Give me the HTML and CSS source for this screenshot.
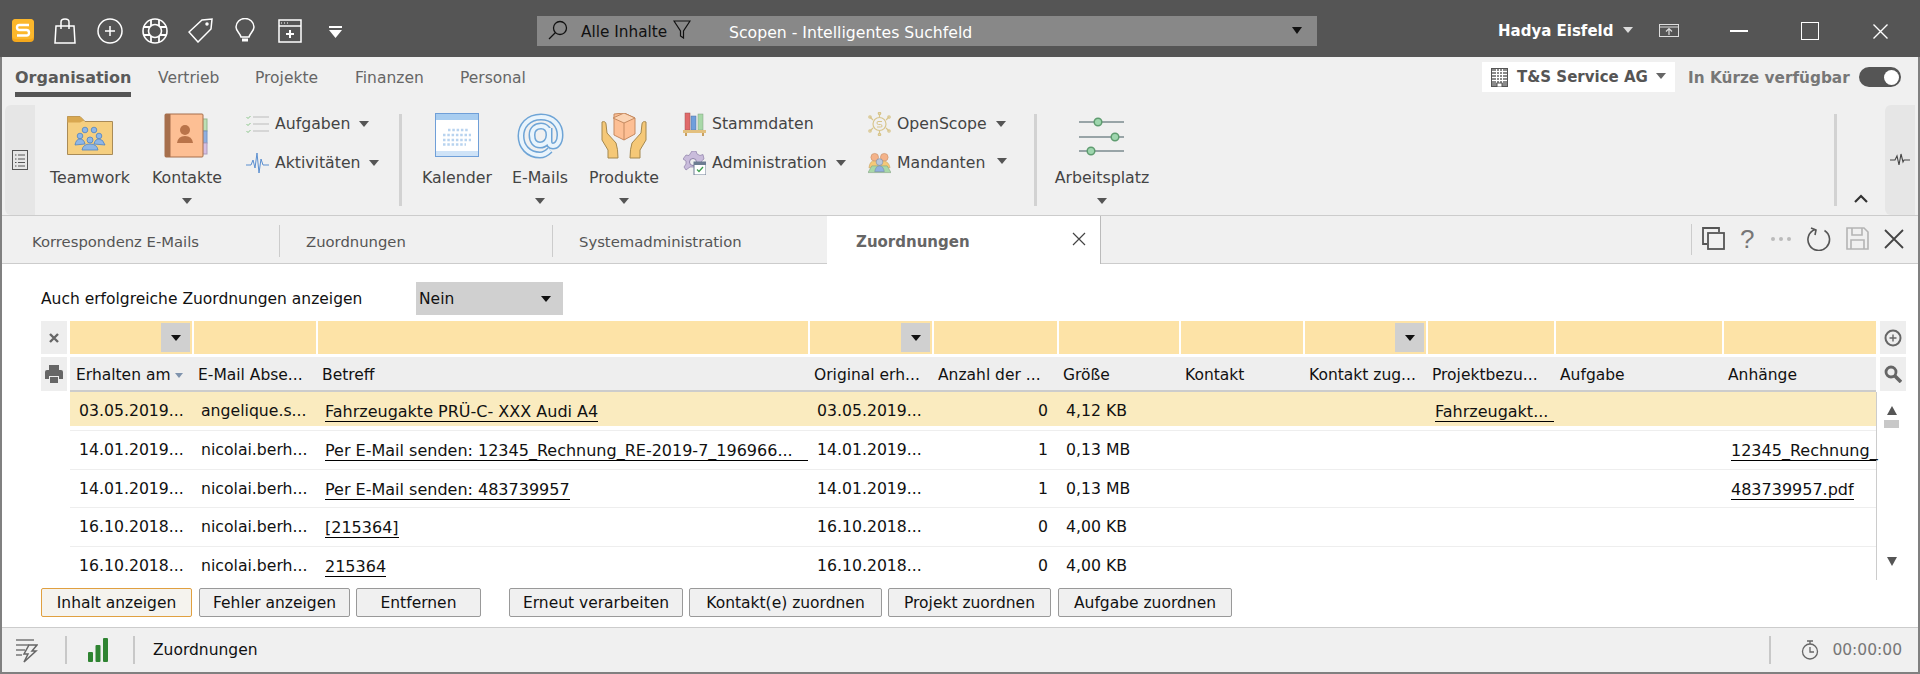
FILE: index.html
```html
<!DOCTYPE html>
<html lang="de">
<head>
<meta charset="utf-8">
<title>Zuordnungen</title>
<link rel="stylesheet" href="styles.css">
</head>
<body>
<div class="app">
  <header class="titlebar">
    <svg class="ti logo" width="22" height="23" viewBox="0 0 22 23"><rect x="0" y="0" width="22" height="23" rx="4" fill="#f5a81c"/><rect x="0" y="0" width="22" height="20" rx="4" fill="#fbb72c"/><path d="M17 6H7.5Q5 6 5 8.5T7.5 11H14.500Q17 11 17 13.800T14.500 16.500H5" fill="none" stroke="#fff" stroke-width="2.400"/></svg>
    <svg class="ti bag" width="22" height="26" viewBox="0 0 22 26" fill="none" stroke="#fff" stroke-width="1.500"><path d="M2 8H20L21 25H1Z"/><path d="M7 11V4Q7 1 11 1T15 4V11"/></svg>
    <svg class="ti plus" width="26" height="26" viewBox="0 0 26 26" fill="none" stroke="#fff" stroke-width="1.500"><circle cx="13" cy="13" r="12"/><path d="M8 13H18M13 8V18"/></svg>
    <svg class="ti buoy" width="26" height="26" viewBox="0 0 26 26" fill="none" stroke="#fff" stroke-width="1.600"><circle cx="13" cy="13" r="12"/><circle cx="13" cy="13" r="6.500"/><path d="M9 2V8M17 2V8M9 18V24M17 18V24M2 9H8M2 17H8M18 9H24M18 17H24" stroke-width="1.800"/></svg>
    <svg class="ti tag" width="25" height="25" viewBox="0 0 25 25" fill="none" stroke="#fff" stroke-width="1.500"><path d="M14 2L24 1L23 11L10 24L1 14Z"/><circle cx="19" cy="6" r="1" fill="#fff"/></svg>
    <svg class="ti bulb" width="20" height="26" viewBox="0 0 20 26" fill="none" stroke="#fff" stroke-width="1.500"><path d="M6 19C5 15 1 13 1 9A9 8.500 0 0 1 19 9C19 13 15 15 14 19Z"/><path d="M7 22H13" stroke-width="3"/></svg>
    <svg class="ti win" width="24" height="24" viewBox="0 0 24 24" fill="none" stroke="#fff" stroke-width="1.500"><rect x="1" y="1" width="22" height="22"/><path d="M1 7H23"/><path d="M3 4H4M6 4H7M9 4H10" stroke-width="1"/><path d="M8 15H16M12 11V19" stroke-width="2"/></svg>
    <svg class="ti more" width="13" height="12" viewBox="0 0 13 12" fill="#fff"><rect x="0" y="0" width="13" height="2"/><path d="M0 4H13L6.500 12Z"/></svg>
    <div class="search">
      <svg class="search-lens" width="20" height="20" viewBox="0 0 20 20" fill="none" stroke="#111" stroke-width="1.300"><circle cx="12" cy="8" r="6.500"/><path d="M7.500 12.500L1 19"/></svg>
      <span class="search-scope">Alle Inhalte</span>
      <svg class="search-filter" width="18" height="19" viewBox="0 0 18 19" fill="none" stroke="#111" stroke-width="1.200"><path d="M1 1H17L10.500 11V18L7.500 16V11Z"/></svg>
      <span class="search-hint">Scopen - Intelligentes Suchfeld</span>
      <span class="tri search-tri"></span>
    </div>
    <span class="user">Hadya Eisfeld</span>
    <span class="tri user-tri"></span>
    <svg class="export" width="20" height="13" viewBox="0 0 20 13" fill="none" stroke="#ddd" stroke-width="1"><rect x="0.500" y="0.500" width="19" height="12"/><path d="M0 3H20"/><path d="M10 11V5M7 7.500L10 4.500L13 7.500" stroke-width="1.200"/></svg>
    <svg class="wbtn wmin" width="18" height="2" viewBox="0 0 18 2"><rect width="18" height="2" fill="#fff"/></svg>
    <svg class="wbtn wmax" width="18" height="18" viewBox="0 0 18 18" fill="none" stroke="#fff"><rect x="0.500" y="0.500" width="17" height="17"/></svg>
    <svg class="wbtn wclose" width="15" height="15" viewBox="0 0 15 15" fill="none" stroke="#fff" stroke-width="1.400"><path d="M0.500 0.500L14.500 14.500M14.500 0.500L0.500 14.500"/></svg>
  </header>

  <nav class="menubar">
    <a class="menu menu-on">Organisation</a>
    <a class="menu m-v">Vertrieb</a>
    <a class="menu m-p">Projekte</a>
    <a class="menu m-f">Finanzen</a>
    <a class="menu m-e">Personal</a>
    <div class="company">
      <svg width="17" height="19" viewBox="0 0 17 19" fill="#8a8a8a" stroke="#555"><rect x="0.500" y="0.500" width="16" height="18"/><path d="M1 3.500H16M1 6.500H16M1 9.500H16M1 12.500H16M5.500 1V15M8.500 1V15M11.500 1V15" stroke="#fff" stroke-width="1"/><rect x="6" y="15" width="5" height="4" fill="#fff"/></svg>
      <b>T&amp;S Service AG</b>
      <span class="tri tri-g company-tri"></span>
    </div>
    <b class="soon">In Kürze verfügbar</b>
    <span class="toggle"><i></i></span>
  </nav>

  <section class="ribbon">
    <div class="handle handle-l">
      <svg width="16" height="20" viewBox="0 0 16 20" fill="none" stroke="#555"><rect x="0.500" y="0.500" width="15" height="19"/><path d="M3 5H4.500M6 5H13M3 9H4.500M6 9H13M3 12.500H4.500M6 12.500H13M3 16H4.500M6 16H13"/></svg>
    </div>
    <div class="big w90 ml10">
      <svg class="big-ic" width="46" height="46" viewBox="0 0 46 46"><path d="M0.500 3.500H13L18 8.500H45.500V41.500H0.500Z" fill="#f5cf80" stroke="#a98b57"/><path d="M0.500 3.500H13L17 7.500L13 9.500H0.500Z" fill="#d9a850"/><g fill="#8eb6e6" stroke="#4f83c2" stroke-width="0.800"><circle cx="18" cy="17" r="2.800"/><circle cx="27" cy="17" r="2.800"/><circle cx="13" cy="23" r="2.800"/><circle cx="32" cy="23" r="2.800"/><path d="M8 32Q9 26 13 26T18 31Z"/><path d="M27 31Q28 26 32 26T38 32Z"/><circle cx="23" cy="27" r="3"/><path d="M15 37Q16 31 23 31T31 37Z"/></g></svg>
      <span class="big-label">Teamwork</span>
    </div>
    <div class="big w90 ml7">
      <svg class="big-ic" width="46" height="46" viewBox="0 0 46 46"><rect x="38" y="6" width="5" height="12" fill="#bde0b5" stroke="#93b78d"/><rect x="38" y="18" width="5" height="12" fill="#8fb0e0" stroke="#7695c4"/><rect x="38" y="30" width="5" height="11" fill="#d5bfe4" stroke="#ad9bbb"/><rect x="1" y="1" width="38" height="43" rx="1" fill="#fdbf94" stroke="#a66f4c"/><rect x="1" y="1" width="5.500" height="43" fill="#a66f4c"/><circle cx="21" cy="17" r="5" fill="#b9744a"/><path d="M13 30Q14 23 21 23T29 30Z" fill="#b9744a"/></svg>
      <span class="big-label">Kontakte</span>
      <span class="tri big-tri"></span>
    </div>
    <div class="smalls w153">
      <div class="small">
        <svg width="23" height="18" viewBox="0 0 23 18" fill="none" stroke="#bbb" stroke-width="1.200"><path d="M7 2H23M7 9H23M7 16H23"/><path d="M0.500 2L2 3.500L4.500 1M0.500 9L2 10.500L4.500 8M0.500 16L2 17.500L4.500 15" stroke="#7fbf7f" stroke-width="0.900"/></svg>
        <span>Aufgaben</span><span class="tri"></span>
      </div>
      <div class="small">
        <svg width="23" height="24" viewBox="0 0 23 24" fill="none" stroke="#5b8fd0" stroke-width="1"><path d="M0 14H5L7 9L9 17L11 2L13 22L15 8L17 14H23"/></svg>
        <span>Aktivitäten</span><span class="tri"></span>
      </div>
    </div>
    <span class="vsep"></span>
    <div class="big w80 ml15">
      <svg class="big-ic" width="46" height="46" viewBox="0 0 46 46"><rect x="1.500" y="0.500" width="43" height="43" fill="#fff" stroke="#6f9fd8"/><rect x="2" y="1" width="42" height="6" fill="#a8cdf0"/><rect x="2" y="38" width="42" height="5" fill="#cfe3f7"/><g stroke="#b8d3ef" stroke-width="2.500" stroke-dasharray="2.500 1.800"><path d="M14 17H35M9 22H37M9 27H37M9 31.500H32"/></g></svg>
      <span class="big-label">Kalender</span>
    </div>
    <div class="big w80 ml3">
      <svg class="big-ic" width="47" height="46" viewBox="0 0 47 46" fill="none"><g stroke="#6ea4d6" stroke-width="7"><path d="M33 37Q28 42 23 42C11 42 4 33 4 23S11 4 24 4C36 4 43 12 43 22C43 30 39 33 36 33C33 33 32 31 32 28V15M32 22C32 28 28 32 23 32S15 28 15 22S19 13 24 13S32 17 32 22Z"/></g><g stroke="#e9f4fc" stroke-width="4"><path d="M33 37Q28 42 23 42C11 42 4 33 4 23S11 4 24 4C36 4 43 12 43 22C43 30 39 33 36 33C33 33 32 31 32 28V15M32 22C32 28 28 32 23 32S15 28 15 22S19 13 24 13S32 17 32 22Z"/></g></svg>
      <span class="big-label">E-Mails</span>
      <span class="tri big-tri"></span>
    </div>
    <div class="big w80 ml4">
      <svg class="big-ic" width="46" height="46" viewBox="0 0 46 46"><path d="M13 1L23 0L34 5V21L23 27L13 22Z" fill="#fdbf94" stroke="#c58a60"/><path d="M12 5L23 10L34 5L23 0Z" fill="#fbd4b4" stroke="#c58a60"/><path d="M23 10V27" stroke="#c58a60"/><path d="M1 9C3 8 5 9 5 11L6 20L15 30Q17 36 17 45H7V37L1 27Z" fill="#f5c877" stroke="#a4884f"/><path d="M45 9C43 8 41 9 41 11L40 20L31 30Q29 36 29 45H39V37L45 27Z" fill="#f5c877" stroke="#a4884f"/></svg>
      <span class="big-label">Produkte</span>
      <span class="tri big-tri"></span>
    </div>
    <div class="smalls w185">
      <div class="small">
        <svg width="23" height="24" viewBox="0 0 23 24"><rect x="2" y="1" width="5" height="17" fill="#e06a6a" stroke="#a05050" stroke-width="0.500"/><rect x="8" y="4" width="5" height="14" fill="#6f9fdc" stroke="#5070a0" stroke-width="0.500"/><rect x="15" y="2" width="5" height="16" fill="#a8d8a8" stroke="#80a080" stroke-width="0.500"/><rect x="0" y="18" width="23" height="3" fill="#e3c07f"/><path d="M3 21V24M20 21V24" stroke="#c8a060" stroke-width="2"/></svg>
        <span>Stammdaten</span>
      </div>
      <div class="small">
        <svg width="23" height="24" viewBox="0 0 23 24"><path d="M9 0H13L14 3L17 4.500L20 3.500L21 8L18.500 10V14L21 16H7L3 19L1 16L3 13V10L0 8L3 4L6 4.500Z" fill="#c9bcdb" stroke="#8c7ea8" stroke-width="0.700"/><circle cx="10" cy="11" r="3.500" fill="#f0f0f0" stroke="#8c7ea8"/><rect x="11" y="11" width="12" height="13" fill="#fff" stroke="#6d7d92"/><rect x="11" y="11" width="12" height="3" fill="#6d7d92"/><path d="M14 18.500L16 20.500L20 16" fill="none" stroke="#3f9f50" stroke-width="1.300"/></svg>
        <span>Administration</span><span class="tri"></span>
      </div>
    </div>
    <div class="smalls w166">
      <div class="small">
        <svg width="23" height="24" viewBox="0 0 23 24" fill="none" stroke="#d8c58c" stroke-width="1.200"><circle cx="11.500" cy="12" r="6.500"/><path d="M11.500 5V1.500M11.500 19V22.500M5 8L2 5M18 8L21 5M5 16L2 19M18 16L21 19"/><circle cx="11.500" cy="1.500" r="1.200"/><circle cx="11.500" cy="22.500" r="1.200"/><circle cx="2" cy="5" r="1.200"/><circle cx="21" cy="5" r="1.200"/><circle cx="2" cy="19" r="1.200"/><circle cx="21" cy="19" r="1.200"/><path d="M14 9.500H10Q9 9.500 9 11T10.500 12.500H12.500Q14 12.500 14 14T12.500 15H9" stroke-width="1"/></svg>
        <span>OpenScope</span><span class="tri"></span>
      </div>
      <div class="small">
        <svg width="24" height="22" viewBox="0 0 24 22"><circle cx="7" cy="5" r="4" fill="#f4b38a" stroke="#c58a60" stroke-width="0.600"/><circle cx="17" cy="5" r="4" fill="#f4b38a" stroke="#c58a60" stroke-width="0.600"/><path d="M1 16Q2 8 7 9T12 16Z" fill="#f5c877" stroke="#c5a060" stroke-width="0.600"/><path d="M12 16Q12 8 17 9T23 16Z" fill="#f5c877" stroke="#c5a060" stroke-width="0.600"/><path d="M0 21L4 14H20L24 21Z" fill="#a8d8a8" stroke="#80a080" stroke-width="0.600"/><circle cx="12" cy="10" r="3.500" fill="#b8c6dc" stroke="#7a8aa0" stroke-width="0.600"/><path d="M7 20Q8 14 12 14T17 20Z" fill="#8fb0e0" stroke="#7a8aa0" stroke-width="0.600"/></svg>
        <span>Mandanten</span><span class="tri mand-tri"></span>
      </div>
    </div>
    <span class="vsep"></span>
    <div class="big w100 ml15">
      <svg class="big-ic" width="46" height="46" viewBox="0 0 46 46" fill="none" stroke="#7b8a8f" stroke-width="1.500"><path d="M0 9H45M0 24H45M0 38H45"/><circle cx="19" cy="9" r="3.800" fill="#9ed6ae" stroke="#5f9c70"/><circle cx="36" cy="24" r="3.800" fill="#9ed6ae" stroke="#5f9c70"/><circle cx="12" cy="38" r="3.800" fill="#9ed6ae" stroke="#5f9c70"/></svg>
      <span class="big-label">Arbeitsplatz</span>
      <span class="tri big-tri"></span>
    </div>
    <span class="spacer"></span>
    <span class="vsep"></span>
    <div class="collapse">
      <svg width="14" height="9" viewBox="0 0 14 9" fill="none" stroke="#333" stroke-width="2.200"><path d="M1 8L7 2L13 8"/></svg>
    </div>
    <div class="handle handle-r">
      <svg width="20" height="14" viewBox="0 0 20 14" fill="none" stroke="#444" stroke-width="1.100"><path d="M0 7H5L7 3L9 12L11 1L13 9L14 7H20"/></svg>
    </div>
  </section>

  <nav class="tabbar">
    <a class="tab tab-a">Korrespondenz E-Mails</a><span class="tabsep"></span>
    <a class="tab tab-b">Zuordnungen</a><span class="tabsep"></span>
    <a class="tab tab-c">Systemadministration</a>
    <a class="tab-active"><span>Zuordnungen</span><svg width="14" height="14" viewBox="0 0 14 14" fill="none" stroke="#444" stroke-width="1.200"><path d="M1 1L13 13M13 1L1 13"/></svg></a>
    <span class="spacer"></span>
    <span class="toolsep"></span>
    <div class="tools">
      <svg width="23" height="23" viewBox="0 0 23 23" fill="none" stroke="#555" stroke-width="1.800"><path d="M5 17H1V1H17V5"/><rect x="6" y="6" width="16" height="16"/></svg>
      <span class="qm">?</span>
      <svg width="22" height="6" viewBox="0 0 22 6" fill="#bbb"><circle cx="3" cy="3" r="2"/><circle cx="11" cy="3" r="2"/><circle cx="19" cy="3" r="2"/></svg>
      <svg width="24" height="24" viewBox="0 0 24 24" fill="none" stroke="#555" stroke-width="1.600"><path d="M8 2.500A10.800 10.800 0 1 0 17.500 3.500"/><path d="M4 1L9 3L8 8"/></svg>
      <svg width="23" height="23" viewBox="0 0 23 23" fill="none" stroke="#b4b4b4" stroke-width="1.600"><path d="M1 1H18L22 5V22H1Z"/><path d="M6 1V8H16V1M5 22V13H18V22"/></svg>
      <svg width="20" height="20" viewBox="0 0 20 20" fill="none" stroke="#444" stroke-width="1.800"><path d="M1 1L19 19M19 1L1 19"/></svg>
    </div>
  </nav>

  <main class="content">
    <div class="option">
      <label class="option-label">Auch erfolgreiche Zuordnungen anzeigen</label>
      <div class="select"><span>Nein</span><span class="tri tri-k"></span></div>
    </div>

    <div class="gridrow filter">
      <div class="side side-l"><svg width="10" height="10" viewBox="0 0 10 10" fill="none" stroke="#666" stroke-width="2.400"><path d="M1 1L9 9M9 1L1 9"/></svg></div>
      <div class="fc"><span class="fdrop"><span class="tri tri-k"></span></span></div>
      <div class="fc"></div>
      <div class="fc"></div>
      <div class="fc"><span class="fdrop"><span class="tri tri-k"></span></span></div>
      <div class="fc"></div>
      <div class="fc"></div>
      <div class="fc"></div>
      <div class="fc"><span class="fdrop"><span class="tri tri-k"></span></span></div>
      <div class="fc"></div>
      <div class="fc"></div>
      <div class="fc"></div>
      <div class="side side-r"><svg width="18" height="18" viewBox="0 0 18 18" fill="none" stroke="#666" stroke-width="2"><circle cx="9" cy="9" r="7.500"/><path d="M5.500 9H12.500M9 5.500V12.500" stroke-width="1.400"/></svg></div>
    </div>

    <div class="gridrow head">
      <div class="side side-l"><svg width="18" height="18" viewBox="0 0 18 18" fill="#666"><path d="M4 0H14V5H4Z"/><path d="M0 7Q0 5 2 5H16Q18 5 18 7V14H14V11H4V14H0Z"/><path d="M5 12H13V18H5Z"/></svg></div>
      <div class="hc">Erhalten am<span class="sort"></span></div>
      <div class="hc">E-Mail Abse...</div>
      <div class="hc">Betreff</div>
      <div class="hc">Original erh...</div>
      <div class="hc">Anzahl der ...</div>
      <div class="hc">Größe</div>
      <div class="hc">Kontakt</div>
      <div class="hc">Kontakt zug...</div>
      <div class="hc">Projektbezu...</div>
      <div class="hc">Aufgabe</div>
      <div class="hc">Anhänge</div>
      <div class="side side-r"><svg width="18" height="18" viewBox="0 0 18 18" fill="none" stroke="#666"><circle cx="7" cy="7" r="5" stroke-width="2.800"/><path d="M11 11L17 17" stroke-width="3.600"/></svg></div>
    </div>

    <div class="body">
      <div class="rows">
        <div class="row row-sel">
          <div class="c">03.05.2019...</div><div class="c">angelique.s...</div>
          <div class="c"><a class="lnk">Fahrzeugakte PRÜ-C- XXX Audi A4</a></div>
          <div class="c">03.05.2019...</div><div class="c num">0</div><div class="c">4,12 KB</div><div class="c"></div><div class="c"></div>
          <div class="c"><a class="lnk fill">Fahrzeugakt...</a></div><div class="c"></div><div class="c"></div>
        </div>
        <div class="row">
          <div class="c">14.01.2019...</div><div class="c">nicolai.berh...</div>
          <div class="c"><a class="lnk fill">Per E-Mail senden: 12345_Rechnung_RE-2019-7_196966...</a></div>
          <div class="c">14.01.2019...</div><div class="c num">1</div><div class="c">0,13 MB</div><div class="c"></div><div class="c"></div><div class="c"></div><div class="c"></div>
          <div class="c"><a class="lnk fill">12345_Rechnung_</a></div>
        </div>
        <div class="row">
          <div class="c">14.01.2019...</div><div class="c">nicolai.berh...</div>
          <div class="c"><a class="lnk">Per E-Mail senden: 483739957</a></div>
          <div class="c">14.01.2019...</div><div class="c num">1</div><div class="c">0,13 MB</div><div class="c"></div><div class="c"></div><div class="c"></div><div class="c"></div>
          <div class="c"><a class="lnk">483739957.pdf</a></div>
        </div>
        <div class="row">
          <div class="c">16.10.2018...</div><div class="c">nicolai.berh...</div>
          <div class="c"><a class="lnk">[215364]</a></div>
          <div class="c">16.10.2018...</div><div class="c num">0</div><div class="c">4,00 KB</div><div class="c"></div><div class="c"></div><div class="c"></div><div class="c"></div><div class="c"></div>
        </div>
        <div class="row">
          <div class="c">16.10.2018...</div><div class="c">nicolai.berh...</div>
          <div class="c"><a class="lnk">215364</a></div>
          <div class="c">16.10.2018...</div><div class="c num">0</div><div class="c">4,00 KB</div><div class="c"></div><div class="c"></div><div class="c"></div><div class="c"></div><div class="c"></div>
        </div>
      </div>
      <div class="scroll">
        <span class="sc-up"></span>
        <span class="sc-thumb"></span>
        <span class="spacer"></span>
        <span class="sc-down"></span>
      </div>
    </div>

    <div class="actions">
      <button class="btn btn-on b150">Inhalt anzeigen</button>
      <button class="btn b151">Fehler anzeigen</button>
      <button class="btn b125">Entfernen</button>
      <button class="btn b174 gap28">Erneut verarbeiten</button>
      <button class="btn b193">Kontakt(e) zuordnen</button>
      <button class="btn b163">Projekt zuordnen</button>
      <button class="btn b174">Aufgabe zuordnen</button>
    </div>
  </main>

  <footer class="status">
    <svg class="st-bolt" width="22" height="25" viewBox="0 0 22 25" fill="none" stroke="#777" stroke-width="1.500"><path d="M0 2H18M0 7H13M0 12H9M0 17H6"/><path d="M13 7H21L16 13H20L8 24L12 16H8Z" fill="#f0f0f0" stroke="#666"/></svg>
    <span class="st-sep s1"></span>
    <svg class="st-bars" width="20" height="24" viewBox="0 0 20 24" fill="#2f8432"><rect x="0" y="14" width="5" height="10" rx="1"/><rect x="7.500" y="7" width="5" height="17" rx="1"/><rect x="15" y="0" width="5" height="24" rx="1"/></svg>
    <span class="st-sep s2"></span>
    <span class="st-text">Zuordnungen</span>
    <span class="spacer"></span>
    <span class="st-sep s3"></span>
    <svg class="st-clock" width="18" height="20" viewBox="0 0 18 20" fill="none" stroke="#666" stroke-width="1.300"><circle cx="9" cy="11.500" r="7.500"/><path d="M9 7V12H13M6 1H12M9 1V4"/></svg>
    <span class="st-time">00:00:00</span>
  </footer>
</div>
</body>
</html>
```
FILE: styles.css
```css
* { box-sizing: border-box; }
html, body { margin: 0; padding: 0; }
body {
  width: 1920px;
  height: 674px;
  overflow: hidden;
  font-family: "DejaVu Sans", "Liberation Sans", sans-serif;
  font-size: 15.500px;
  color: #111;
  background: #f0f0f0;
}
.app {
  width: 1920px;
  height: 674px;
  display: flex;
  flex-direction: column;
  border: 2px solid #808080;
  border-top: 0;
}
.spacer { flex: 1; }
.tri {
  display: inline-block;
  width: 0;
  height: 0;
  border-left: 5.5px solid transparent;
  border-right: 5.5px solid transparent;
  border-top: 6px solid #555;
  flex: none;
}
.tri-g { border-top-color: #666; }
.tri-k { border-top-color: #111; }

/* title bar */
.titlebar {
  height: 57px;
  margin: 0 -2px;
  background: #555;
  display: flex;
  align-items: center;
  color: #fff;
  flex: none;
}
.ti { flex: none; }
.logo { margin-left: 12px; margin-top: 4px; }
.bag { margin-left: 20px; margin-top: 4px; }
.plus { margin-left: 21px; margin-top: 5px; }
.buoy { margin-left: 19px; margin-top: 5px; }
.tag { margin-left: 20px; margin-top: 4px; }
.bulb { margin-left: 22px; margin-top: 5px; }
.win { margin-left: 23px; margin-top: 5px; }
.more { margin-left: 27px; margin-top: 6px; }
.search {
  width: 780px;
  height: 30px;
  margin-left: 195px;
  margin-top: 5px;
  background: #888;
  display: flex;
  align-items: center;
}
.search-lens { margin-left: 11px; margin-bottom: 2px; }
.search-scope { margin-left: 13px; color: #111; width: 92px; white-space: nowrap; padding-top: 2px; font-size: 15.300px; }
.search-filter { margin-bottom: 4px; }
.search-hint { margin-left: 38px; color: #fff; flex: 1; padding-top: 2px; font-size: 15.700px; }
.search-tri { margin-right: 15px; border-top-color: #111; border-top-width: 7px; margin-bottom: 2px; }
.user { margin-left: 181px; margin-top: 5px; font-weight: 700; font-size: 15px; width: 121px; white-space: nowrap; }
.user-tri { margin-left: 4px; margin-top: 3px; border-top-color: #ddd; }
.export { margin-left: 26px; margin-top: 4px; }
.wmin { margin-left: 51px; margin-top: 5px; }
.wmax { margin-left: 53px; margin-top: 5px; }
.wclose { margin-left: 54px; margin-top: 5px; }

/* menu row */
.menubar {
  height: 46px;
  display: flex;
  align-items: flex-start;
  flex: none;
  color: #666;
}
.menu { margin-top: 10px; line-height: 22px; font-size: 15.500px; white-space: nowrap; }
.menu-on {
  margin-left: 13px;
  width: 116px;
  height: 30px;
  font-size: 16px;
  font-weight: 700;
  border-bottom: 5px solid #555;
  color: #5a5a5a;
}
.m-v { margin-left: 27px; width: 97px; }
.m-p { width: 100px; }
.m-f { width: 105px; }
.m-e { width: 100px; }
.company {
  margin-left: auto;
  margin-top: 5px;
  width: 193px;
  height: 30px;
  background: #fff;
  display: flex;
  align-items: center;
  padding-left: 9px;
  color: #555;
}
.company b { margin-left: 9px; width: 136px; font-size: 15px; white-space: nowrap; }
.company-tri { margin-left: 3px; margin-bottom: 3px; }
.soon { margin-left: 13px; margin-top: 10px; line-height: 22px; width: 171px; color: #777; font-size: 15.300px; white-space: nowrap; }
.toggle {
  margin-top: 10px;
  margin-right: 17px;
  width: 42px;
  height: 20px;
  border-radius: 10px;
  background: #555;
  display: flex;
  justify-content: flex-end;
  align-items: center;
  padding-right: 2px;
}
.toggle i { width: 15px; height: 15px; border-radius: 50%; background: #fff; display: block; }

/* ribbon */
.ribbon {
  height: 113px;
  display: flex;
  align-items: stretch;
  border-bottom: 1px solid #ccc;
  flex: none;
  color: #444;
}
.handle {
  width: 30px;
  height: 110px;
  margin-top: 2px;
  background: #e6e6e6;
  display: flex;
  align-items: center;
  justify-content: center;
  flex: none;
}
.handle-l { margin-left: 3px; border-radius: 6px 0 0 6px; }
.handle-r { margin-right: 3px; border-radius: 6px 0 0 6px; }
.big {
  display: flex;
  flex-direction: column;
  align-items: center;
  padding-top: 10px;
  flex: none;
}
.big-ic { flex: none; }
.big-label { margin-top: 9px; line-height: 20px; white-space: nowrap; font-size: 15.800px; }
.big-tri { margin-top: 10px; border-top-color: #555; }
.w90 { width: 90px; }
.w80 { width: 80px; }
.w100 { width: 100px; }
.ml10 { margin-left: 10px; }
.ml7 { margin-left: 7px; }
.ml15 { margin-left: 15px; }
.ml3 { margin-left: 3px; }
.ml4 { margin-left: 4px; }
.smalls { display: flex; flex-direction: column; flex: none; padding-top: 1px; }
.w153 { width: 153px; margin-left: 14px; }
.w185 { width: 185px; margin-left: 19px; }
.w166 { width: 166px; }
.small {
  height: 39px;
  display: flex;
  align-items: center;
  white-space: nowrap;
  font-size: 15.700px;
}
.small svg { flex: none; width: 23px; margin-right: 6px; }
.small .tri { margin-left: 9px; }
.mand-tri { margin-left: 12px !important; margin-bottom: 3px; }
.vsep { width: 3px; height: 92px; margin-top: 11px; background: #d2d2d2; flex: none; }
.collapse { width: 48px; display: flex; justify-content: center; align-items: flex-end; padding-bottom: 12px; flex: none; }

/* tabs */
.tabbar {
  height: 48px;
  display: flex;
  align-items: stretch;
  border-bottom: 1px solid #ccc;
  flex: none;
  color: #555;
}
.tab { display: flex; align-items: center; flex: none; white-space: nowrap; font-size: 14.800px; padding-left: 30px; padding-top: 3px; }
.tab-a { width: 277px; }
.tab-b { width: 272px; padding-left: 26px; }
.tab-c { width: 274px; padding-left: 26px; }
.tabsep { width: 1px; height: 32px; margin-top: 9px; background: #ccc; flex: none; }
.tab-active {
  width: 274px;
  height: 48px;
  margin-left: 0;
  background: #fff;
  border-right: 1px solid #bbb;
  display: flex;
  align-items: center;
  justify-content: space-between;
  padding: 0 14px 0 29px;
  font-weight: 700;
  font-size: 15px;
  color: #666;
  flex: none;
}
.tab-active span { padding-top: 3px; }
.tab-active svg { margin-bottom: 3px; }
.toolsep { width: 1px; height: 31px; margin-top: 8px; background: #ccc; flex: none; }
.tools {
  display: flex;
  align-items: center;
  width: 226px;
  padding: 0 14px 2px 10px;
  justify-content: space-between;
}
.qm { font-size: 26px; line-height: 26px; color: #777; font-family: "Liberation Sans", sans-serif; }

/* content */
.content {
  flex: 1;
  background: #fff;
  display: flex;
  flex-direction: column;
  padding-top: 18px;
  min-height: 0;
  border-bottom: 1px solid #ccc;
}
.option { display: flex; align-items: center; height: 33px; padding-left: 39px; }
.option-label { width: 375px; white-space: nowrap; }
.select {
  width: 147px;
  height: 33px;
  background: #d0d0d0;
  display: flex;
  align-items: center;
  justify-content: space-between;
  padding: 0 12px 0 3px;
}
.gridrow {
  display: grid;
  grid-template-columns: 29px 122px 124px 492px 124px 125px 122px 124px 123px 128px 168px 154px 30px;
  margin-left: 39px;
  width: 1865px;
}
.filter { height: 33px; margin-top: 6px; }
.side {
  background: #eee;
  display: flex;
  align-items: center;
  justify-content: center;
  height: 100%;
}
.side-l { margin-right: 3px; }
.side-r { margin-left: 4px; }
.fc {
  background: #fde3a7;
  border-left: 2px solid #fff;
  display: flex;
  justify-content: flex-end;
  padding: 2px 2px 2px 0;
}
.fc:nth-child(2) { border-left: 0; }
.fdrop {
  width: 29px;
  background: #d0d0d0;
  display: flex;
  align-items: center;
  justify-content: center;
}
.head { height: 35px; margin-top: 3px; }
.hc {
  background: #eee;
  border-bottom: 2px solid #ccc;
  padding-left: 6px;
  padding-top: 8px;
  line-height: 20px;
  white-space: nowrap;
}
.head .side { height: 34px; }
.sort {
  display: inline-block;
  width: 0;
  height: 0;
  margin-left: 5px;
  vertical-align: 2px;
  border-left: 4px solid transparent;
  border-right: 4px solid transparent;
  border-top: 5px solid #7f93ad;
}
.body {
  display: flex;
  height: 188px;
  margin-left: 68px;
  width: 1836px;
  flex: none;
}
.rows { width: 1807px; border-right: 1px solid #ccc; flex: none; }
.row {
  display: grid;
  grid-template-columns: 122px 124px 492px 124px 125px 122px 124px 123px 128px 168px 154px;
  height: 38.750px;
  border-bottom: 1px solid #eee;
  align-items: start;
}
.row:last-child { border-bottom: 0; height: 33px; }
.c {
  height: 34px;
  padding-top: 9px;
  line-height: 20px;
  padding-left: 9px;
  font-size: 15.700px;
  white-space: nowrap;
  min-width: 0;
}
.row-sel .c { background: #faebbf; }
.num { text-align: right; padding-right: 9px; }
.lnk { display: inline-block; font-size: 16px; line-height: 19px; border-bottom: 1px solid #000; color: #111; vertical-align: top; margin-top: 1px; }
.fill { display: block; }
.scroll { flex: 1; display: flex; flex-direction: column; align-items: center; padding-top: 14px; padding-bottom: 14px; }
.sc-up { width: 0; height: 0; border-left: 5px solid transparent; border-right: 5px solid transparent; border-bottom: 9px solid #555; }
.sc-thumb { width: 15px; height: 8px; margin-top: 5px; background: #c8c8c8; }
.sc-down { width: 0; height: 0; border-left: 5px solid transparent; border-right: 5px solid transparent; border-top: 9px solid #555; }
.actions { display: flex; margin-top: 8px; margin-left: 39px; gap: 7px; flex: none; }
.btn {
  height: 29px;
  padding: 0;
  background: #f0f0f0;
  border: 1px solid #999;
  border-radius: 2px;
  font: inherit;
  color: #111;
  flex: none;
}
.btn-on { border-color: #e0a040; background: #f5f3ee; }
.b150 { width: 151px; }
.b151 { width: 151px; }
.b125 { width: 125px; margin-left: -1px; }
.b174 { width: 174px; }
.b193 { width: 193px; margin-left: -1px; }
.b163 { width: 163px; margin-left: -1px; }
.gap28 { margin-left: 21px; }

/* status */
.status {
  height: 44px;
  display: flex;
  align-items: center;
  flex: none;
  background: #f0f0f0;
}
.st-bolt { margin-left: 14px; flex: none; }
.st-sep { width: 2px; height: 28px; background: #c8c8c8; flex: none; }
.s1 { margin-left: 27px; }
.st-bars { margin-left: 21px; flex: none; }
.s2 { margin-left: 25px; }
.st-text { margin-left: 18px; }
.s3 { margin-right: 30px; }
.st-clock { flex: none; }
.st-time { margin-left: 13px; margin-right: 16px; color: #777; }
```
